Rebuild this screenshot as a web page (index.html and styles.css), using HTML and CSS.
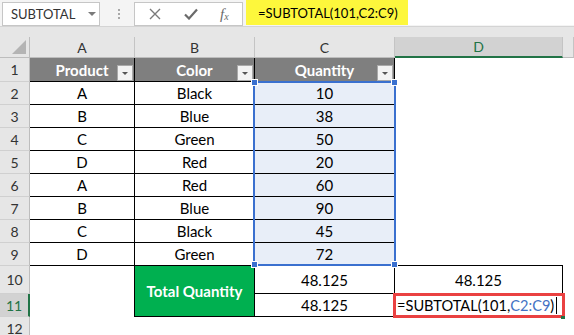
FILE: index.html
```html
<!DOCTYPE html>
<html lang="en">
<head>
    <meta charset="UTF-8">
    <meta name="viewport" content="width=device-width, initial-scale=1.0">
    <title>SUBTOTAL</title>
    <link rel="stylesheet" href="styles.css">
</head>
<body>
    <div class="toolbar">
        <div class="namebox">
            <span>SUBTOTAL</span>
            <span class="caret"></span>
        </div>
        <div class="grip"><i></i><i></i><i></i></div>
        <div class="fxbox">
            <svg width="12" height="12" viewBox="0 0 12 12"><path d="M1 1 L11 11 M11 1 L1 11" stroke="#7a7a7a" stroke-width="1.4" fill="none"/></svg>
            <svg width="14" height="12" viewBox="0 0 14 12"><path d="M1 6.5 L5 10.5 L13 1.5" stroke="#6a6a6a" stroke-width="2.2" fill="none"/></svg>
            <span class="fx">f<sub>x</sub></span>
        </div>
        <div class="formula"><span class="hl">=SUBTOTAL(101,C2:C9)</span></div>
    </div>
    <div class="band"></div>
    <div class="sheet">
        <!-- column headers -->
        <div class="corner"><span class="tri"></span></div>
        <div class="ch">A</div>
        <div class="ch">B</div>
        <div class="ch">C</div>
        <div class="ch active">D</div>
        <div class="ch"></div>

        <!-- row 1 -->
        <div class="rh">1</div>
        <div class="c th">Product<span class="drop"></span></div>
        <div class="c th">Color<span class="drop"></span></div>
        <div class="c th">Quantity<span class="drop"></span></div>
        <div class="e"></div>
        <div class="e"></div>

        <div class="rh">2</div>
        <div class="c">A</div><div class="c">Black</div><div class="c sel">10</div><div class="e"></div><div class="e"></div>
        <div class="rh">3</div>
        <div class="c">B</div><div class="c">Blue</div><div class="c sel">38</div><div class="e"></div><div class="e"></div>
        <div class="rh">4</div>
        <div class="c">C</div><div class="c">Green</div><div class="c sel">50</div><div class="e"></div><div class="e"></div>
        <div class="rh">5</div>
        <div class="c">D</div><div class="c">Red</div><div class="c sel">20</div><div class="e"></div><div class="e"></div>
        <div class="rh">6</div>
        <div class="c">A</div><div class="c">Red</div><div class="c sel">60</div><div class="e"></div><div class="e"></div>
        <div class="rh">7</div>
        <div class="c">B</div><div class="c">Blue</div><div class="c sel">90</div><div class="e"></div><div class="e"></div>
        <div class="rh">8</div>
        <div class="c">C</div><div class="c">Black</div><div class="c sel">45</div><div class="e"></div><div class="e"></div>
        <div class="rh">9</div>
        <div class="c">D</div><div class="c">Green</div><div class="c sel">72</div><div class="e line-b"></div><div class="e"></div>

        <!-- row 10 / 11 -->
        <div class="rh">10</div>
        <div class="e line-r"></div>
        <div class="c total">Total Quantity</div>
        <div class="c">48.125</div>
        <div class="c">48.125</div>
        <div class="e"></div>

        <div class="rh active">11</div>
        <div class="e line-r"></div>
        <div class="c">48.125</div>
        <div class="edit">=SUBTOTAL(101,<span class="ref">C2:C9</span>)<span class="cursor"></span></div>
        <div class="e"></div>

        <div class="rh">12</div>
        <div class="e"></div><div class="e"></div><div class="e"></div><div class="e"></div><div class="e"></div>

        <!-- overlays -->
        <div class="range">
            <span class="h tl"></span><span class="h tr"></span>
            <span class="h bl"></span><span class="h br"></span>
        </div>
        <div class="mark"></div>
        <div class="fill"></div>
    </div>
</body>
</html>
```

FILE: styles.css
```css
body {
    margin: 0;
    width: 574px;
    height: 335px;
    overflow: hidden;
    background: #ffffff;
    font-family: Lato, "Liberation Sans", sans-serif;
    color: #000000;
}
.toolbar {
    display: flex;
    align-items: flex-start;
    height: 26px;
    background: #f4f4f4;
    border-bottom: 1px solid #d4d4d4;
}
.namebox {
    display: flex;
    align-items: center;
    justify-content: space-between;
    box-sizing: border-box;
    width: 98px;
    height: 24px;
    margin: 2px 0 0 2px;
    padding: 0 3px 0 8px;
    background: #ffffff;
    border: 1px solid #c6c6c6;
    font-size: 13px;
    color: #333333;
}
.caret {
    width: 0;
    height: 0;
    border-left: 4px solid transparent;
    border-right: 4px solid transparent;
    border-top: 4px solid #7a7a7a;
}
.grip {
    display: flex;
    flex-direction: column;
    gap: 2px;
    width: 2px;
    margin: 9px 0 0 18px;
}
.grip i {
    width: 2px;
    height: 2px;
    background: #a8a8a8;
}
.fxbox {
    display: flex;
    align-items: center;
    box-sizing: border-box;
    width: 109px;
    height: 24px;
    margin: 2px 0 0 14px;
    padding-left: 14px;
    background: #ffffff;
    border: 1px solid #c6c6c6;
}
.fxbox svg:nth-child(2) {
    margin-left: 23px;
}
.fx {
    margin-left: 22px;
    font-family: "Liberation Serif", serif;
    font-style: italic;
    font-size: 15px;
    color: #6a6a6a;
}
.fx sub {
    font-size: 10px;
    vertical-align: -1px;
}
.formula {
    flex: 1;
    height: 25px;
    margin-left: 3px;
    background: #ffffff;
}
.hl {
    display: inline-flex;
    align-items: center;
    height: 25px;
    padding: 0 10px 0 12px;
    background: #fdf73c;
    font-size: 13px;
}
.band {
    height: 10px;
    background: #e6e6e6;
}
.sheet {
    position: relative;
    display: grid;
    grid-template-columns: 30px 105px 120px 140px 168px 11px;
    grid-template-rows: 21px 24px repeat(8, 23px) 28px 23px 23px;
}
.corner {
    position: relative;
    background: #e6e6e6;
    border-right: 1px solid #bdbdbd;
    border-bottom: 1px solid #bdbdbd;
}
.tri {
    position: absolute;
    right: 3px;
    bottom: 3px;
    width: 0;
    height: 0;
    border-left: 14px solid transparent;
    border-bottom: 14px solid #b4b4b4;
}
.ch {
    display: flex;
    align-items: center;
    justify-content: center;
    background: #e6e6e6;
    border-right: 1px solid #c4c4c4;
    border-bottom: 1px solid #bdbdbd;
    font-size: 14px;
    color: #333333;
}
.ch:last-child {
    border-right: none;
}
.ch.active {
    background: #d2d2d2;
    border-bottom: 2px solid #217346;
    color: #217346;
}
.rh {
    display: flex;
    align-items: center;
    justify-content: center;
    background: #e6e6e6;
    border-right: 1px solid #bdbdbd;
    border-bottom: 1px solid #d0d0d0;
    font-size: 14px;
    color: #333333;
}
.rh.active {
    background: #d2d2d2;
    border-right: 2px solid #217346;
    color: #217346;
}
.c {
    position: relative;
    display: flex;
    align-items: center;
    justify-content: center;
    border-right: 1px solid #000000;
    border-bottom: 1px solid #000000;
    font-size: 15px;
}
.th {
    background: #7f7f7f;
    color: #ffffff;
    font-weight: bold;
}
.drop {
    position: absolute;
    right: 1px;
    bottom: 0;
    box-sizing: border-box;
    width: 16px;
    height: 16px;
    background: #f3f3f3;
    border: 1px solid #a9a9a9;
}
.drop::after {
    content: "";
    position: absolute;
    left: 4px;
    top: 6px;
    border-left: 3px solid transparent;
    border-right: 3px solid transparent;
    border-top: 3px solid #555555;
}
.sel {
    background: #e8eef8;
}
.total {
    grid-row: span 2;
    background: #00b050;
    color: #ffffff;
    font-weight: bold;
}
.line-r {
    border-right: 1px solid #000000;
}
.line-b {
    border-bottom: 1px solid #000000;
}
.edit {
    display: flex;
    align-items: center;
    padding-left: 2px;
    font-size: 14.6px;
    white-space: nowrap;
}
.ref {
    color: #4472c4;
}
.cursor {
    width: 1px;
    height: 17px;
    margin-left: 2px;
    background: #000000;
}
.range {
    position: absolute;
    left: 253px;
    top: 44px;
    box-sizing: border-box;
    width: 143px;
    height: 185px;
    border: 2px solid #3a70cf;
}
.h {
    position: absolute;
    width: 5px;
    height: 5px;
    background: #3a70cf;
    border: 1px solid #ffffff;
}
.tl { left: -4px; top: -4px; }
.tr { right: -4px; top: -4px; }
.bl { left: -4px; bottom: -4px; }
.br { right: -4px; bottom: -4px; }
.mark {
    position: absolute;
    left: 393px;
    top: 256px;
    box-sizing: border-box;
    width: 172px;
    height: 25px;
    border: 3px solid #ea4141;
}
.fill {
    position: absolute;
    left: 561px;
    top: 279px;
    width: 4px;
    height: 3px;
    background: #217346;
}
```
